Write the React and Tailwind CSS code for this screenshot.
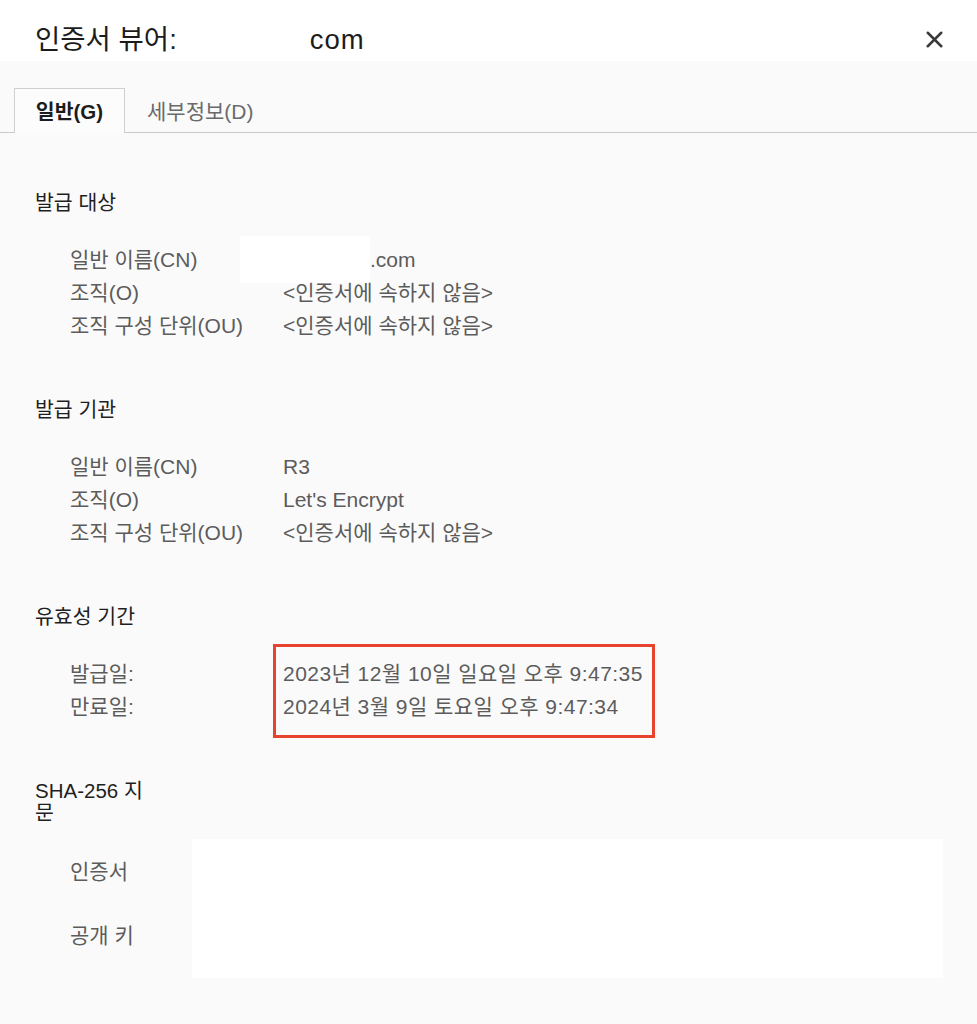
import { X } from "lucide-react";

const subject = [
  { label: "일반 이름(CN)", value: ".com", redact: true },
  { label: "조직(O)", value: "<인증서에 속하지 않음>" },
  { label: "조직 구성 단위(OU)", value: "<인증서에 속하지 않음>" },
];

const issuer = [
  { label: "일반 이름(CN)", value: "R3" },
  { label: "조직(O)", value: "Let's Encrypt" },
  { label: "조직 구성 단위(OU)", value: "<인증서에 속하지 않음>" },
];

const validity = [
  { label: "발급일:", value: "2023년 12월 10일 일요일 오후 9:47:35" },
  { label: "만료일:", value: "2024년 3월 9일 토요일 오후 9:47:34" },
];

const Rows = ({ rows, wide }) => (
  <div className="pl-[35px]">
    {rows.map((row) => (
      <div key={row.label} className="flex h-[33px] items-center">
        <span className="w-[213px] shrink-0">{row.label}</span>
        {row.redact ? (
          <span className="flex items-center">
            <span className="-ml-[43px] h-[47px] w-[130px] bg-white"></span>
            <span>{row.value}</span>
          </span>
        ) : (
          <span className={wide ? "tracking-[0.45px]" : ""}>{row.value}</span>
        )}
      </div>
    ))}
  </div>
);

const Section = ({ title, children, className }) => (
  <section className={className}>
    <h3 className="text-[20.5px] leading-[28px] text-[#1f1f1f]">{title}</h3>
    {children}
  </section>
);

const App = () => {
  return (
    <div
      className="w-[977px] h-[1024px] overflow-hidden bg-[#fafafa] text-[21px] text-[#5c5c5c]"
      style={{ fontFamily: '"Liberation Sans", "Noto Sans CJK KR", sans-serif' }}
    >
      <header className="flex h-[61px] items-center justify-between bg-white pl-[35px] pr-[29px] pt-[18px]">
        <h1 className="flex items-center text-[27.5px] text-[#1c1c1c]">
          <span>인증서 뷰어:</span>
          <span className="ml-[133px] tracking-[1px]">com</span>
        </h1>
        <X className="h-[27px] w-[27px] text-[#3a3a3a]" strokeWidth={2.2} />
      </header>

      <div className="flex items-end border-b border-[#c9c9c9] pl-[14px] pt-[27px]">
        <button className="-mb-px h-[45px] w-[111px] border border-b-0 border-[#cfcfcf] bg-[#fcfcfc] pt-[3px] text-[20.5px] font-bold text-[#1c1c1c]">
          일반(G)
        </button>
        <button className="h-[44px] px-[22px] pt-[3px] text-[21px] text-[#6a6a6a]">세부정보(D)</button>
      </div>

      <div className="pl-[35px]">
        <Section title="발급 대상" className="pt-[56px]">
          <div className="pt-[26px]">
            <Rows rows={subject} />
          </div>
        </Section>

        <Section title="발급 기관" className="pt-[54px]">
          <div className="pt-[26px]">
            <Rows rows={issuer} />
          </div>
        </Section>

        <Section title="유효성 기간" className="pt-[54px]">
          <div className="relative pt-[26px]">
            <Rows rows={validity} wide />
            <div className="pointer-events-none absolute left-[238px] top-[13px] h-[94px] w-[382px] border-[3px] border-[#e8432e]"></div>
          </div>
        </Section>

        <section className="pt-[57px]">
          <h3 className="w-[126px] text-[20.5px] leading-[22px] text-[#1f1f1f]">SHA-256 지문</h3>
          <div className="mt-[15px] flex h-[139px] w-[908px]">
            <div className="flex w-[157px] shrink-0 flex-col justify-around pb-[10px] pl-[35px]">
              <span>인증서</span>
              <span>공개 키</span>
            </div>
            <div className="flex-1 bg-white"></div>
          </div>
        </section>
      </div>
    </div>
  );
};

export default App;
